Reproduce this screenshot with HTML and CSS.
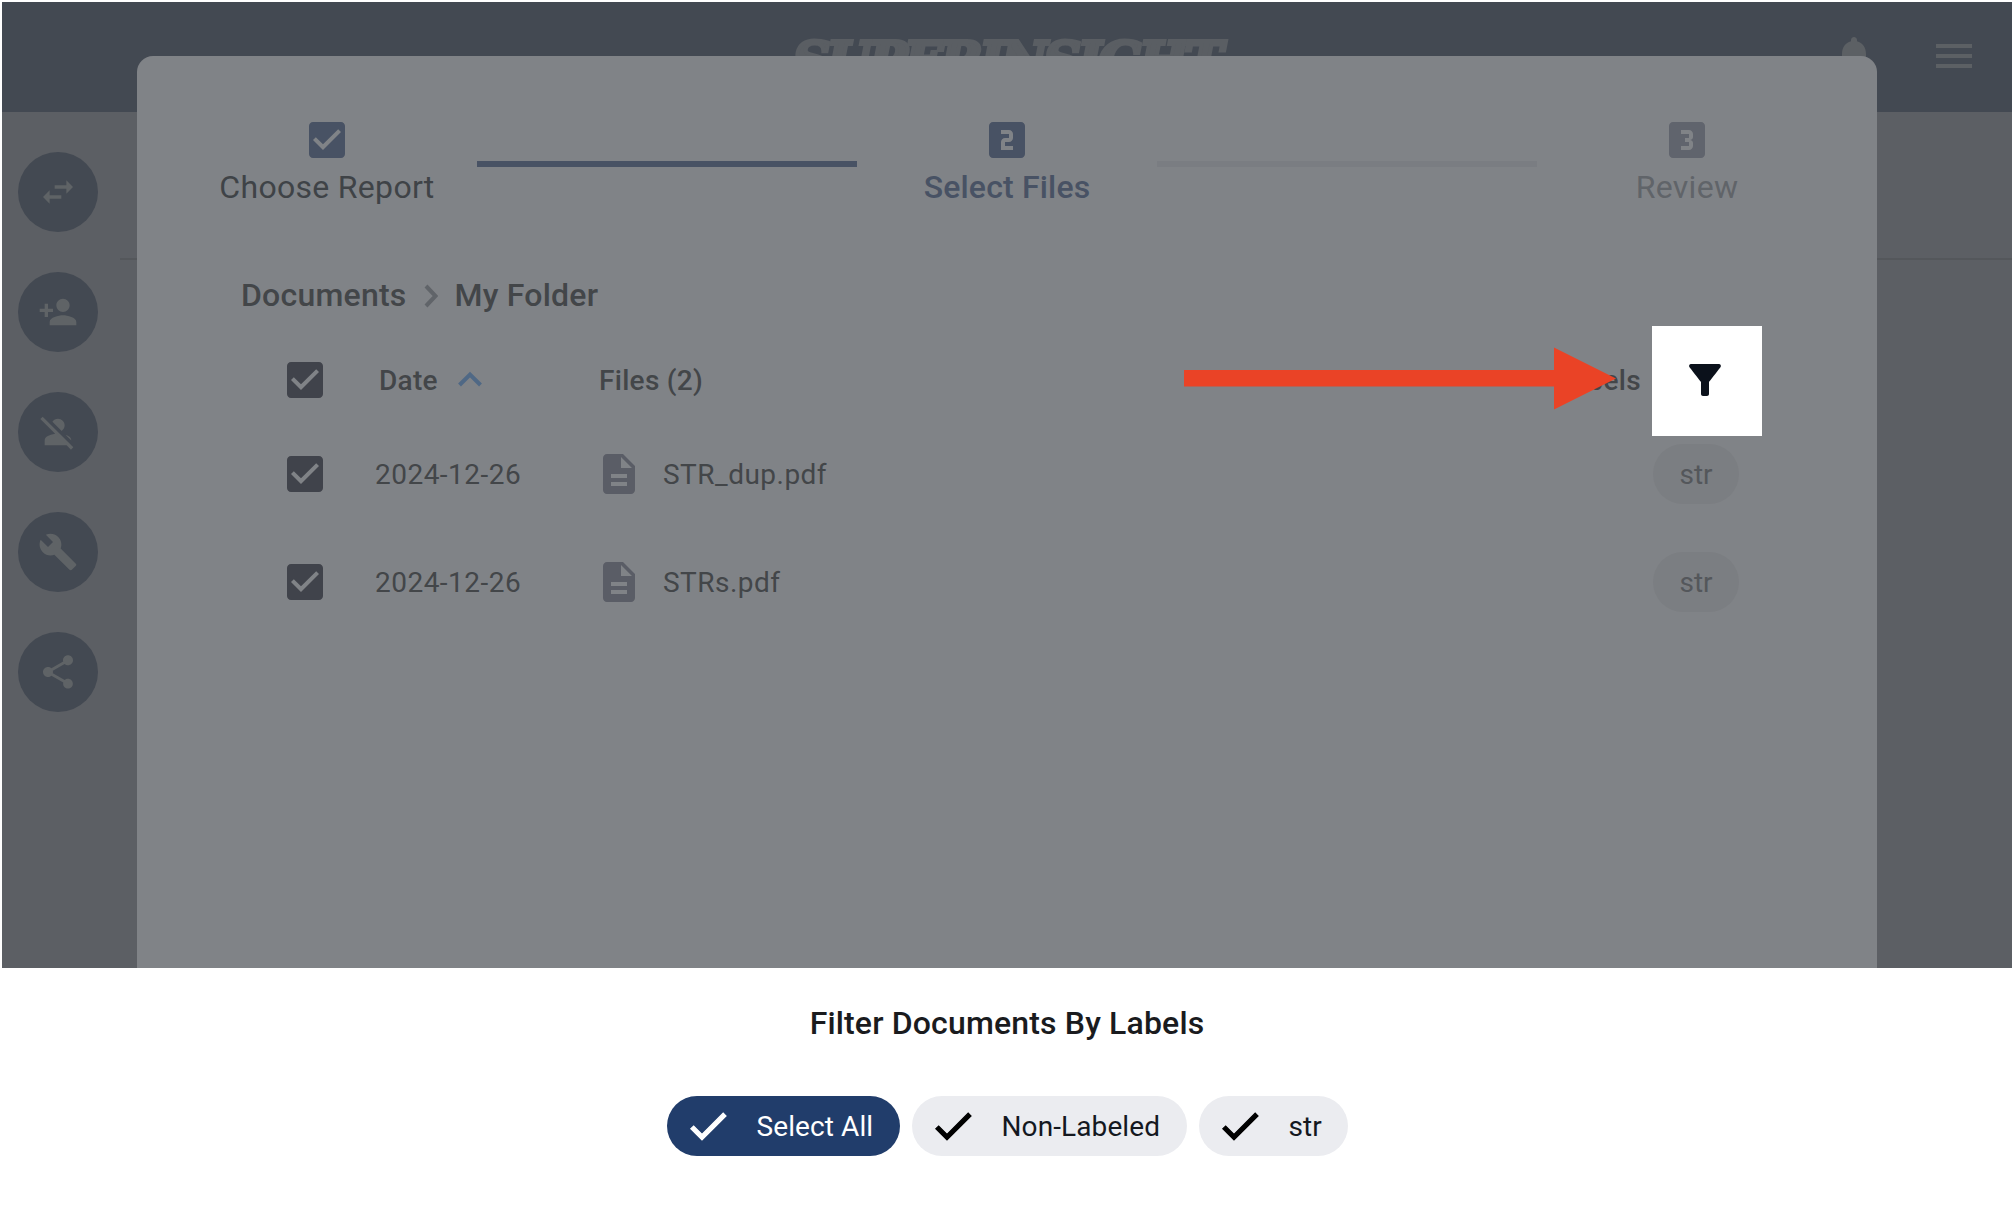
FILE: index.html
```html
<!DOCTYPE html>
<html lang="en">
<head>
<meta charset="utf-8">
<title>Select Files</title>
<link rel="stylesheet" href="styles.css">
</head>
<body>
<svg class="defs" aria-hidden="true">
  <symbol id="checkbox" viewBox="0 0 24 24"><path d="M19 3H5c-1.110 0-2 .9-2 2v14c0 1.100.89 2 2 2h14c1.110 0 2-.9 2-2V5c0-1.100-.89-2-2-2zm-9 14l-5-5 1.410-1.410L10 14.170l7.590-7.590L19 8l-9 9z"/></symbol>
  <symbol id="check" viewBox="0 0 24 24"><path d="M9 16.170L4.830 12l-1.420 1.410L9 19 21 7l-1.410-1.410z"/></symbol>
  <symbol id="doc" viewBox="0 0 24 24"><path d="M14 2H6c-1.100 0-1.990.9-1.990 2L4 20c0 1.100.89 2 1.990 2H18c1.100 0 2-.9 2-2V8l-6-6zm2 16H8v-2h8v2zm0-4H8v-2h8v2zm-3-5V3.500L18.500 9H13z"/></symbol>
</svg>
<div class="screen">
  <header class="topbar">
    <div class="logo">SUPERINSIGHT</div>
    <div class="topbar-actions">
      <svg class="icon" viewBox="0 0 24 24"><path d="M12 22c1.100 0 2-.9 2-2h-4c0 1.100.89 2 2 2zm6-6v-5c0-3.070-1.640-5.640-4.500-6.320V4c0-.83-.67-1.500-1.500-1.500s-1.500.67-1.500 1.500v.68C7.630 5.360 6 7.920 6 11v5l-2 2v1h16v-1l-2-2z"/></svg>
      <svg class="icon" viewBox="0 0 24 24"><path d="M3 18h18v-2H3v2zm0-5h18v-2H3v2zm0-7v2h18V6H3z"/></svg>
    </div>
  </header>
  <div class="body">
    <nav class="rail">
      <span class="rail-btn"><svg viewBox="0 0 24 24"><path d="M6.990 11L3 15l3.990 4v-3H14v-2H6.990v-3zM21 9l-3.990-4v3H10v2h7.010v3L21 9z"/></svg></span>
      <span class="rail-btn"><svg viewBox="0 0 24 24"><path d="M15 12c2.210 0 4-1.790 4-4s-1.790-4-4-4-4 1.790-4 4 1.790 4 4 4zm-9-2V7H4v3H1v2h3v3h2v-3h3v-2H6zm9 4c-2.670 0-8 1.340-8 4v2h16v-2c0-2.660-5.330-4-8-4z"/></svg></span>
      <span class="rail-btn"><svg viewBox="0 0 24 24"><path d="M8.650 5.820C9.360 4.720 10.600 4 12 4c2.210 0 4 1.790 4 4 0 1.400-.72 2.640-1.820 3.350L8.650 5.820zM20 17.170c-.02-1.100-.63-2.110-1.610-2.620-.54-.28-1.130-.54-1.770-.76L20 17.170zM21.190 21.190L2.810 2.810 1.390 4.220l8.890 8.890c-1.810.23-3.390.79-4.670 1.450C4.610 15.070 4 16.100 4 17.220V20h13.170l2.610 2.610 1.410-1.420z"/></svg></span>
      <span class="rail-btn"><svg viewBox="0 0 24 24"><path d="M22.700 19l-9.100-9.100c.9-2.300.4-5-1.500-6.900-2-2-5-2.400-7.400-1.300L9 6 6 9 1.600 4.700C.4 7.100.9 10.100 2.900 12.100c1.900 1.900 4.600 2.400 6.900 1.500l9.100 9.100c.4.4 1 .4 1.400 0l2.300-2.300c.5-.4.5-1.100.1-1.400z"/></svg></span>
      <span class="rail-btn"><svg viewBox="0 0 24 24"><path d="M18 16.080c-.76 0-1.440.3-1.960.77L8.910 12.700c.05-.23.09-.46.09-.7s-.04-.47-.09-.7l7.050-4.110c.54.5 1.250.81 2.040.81 1.660 0 3-1.340 3-3s-1.340-3-3-3-3 1.340-3 3c0 .24.04.47.09.7L8.040 9.810C7.500 9.310 6.790 9 6 9c-1.660 0-3 1.340-3 3s1.340 3 3 3c.79 0 1.500-.31 2.040-.81l7.120 4.160c-.05.21-.08.43-.08.65 0 1.610 1.310 2.920 2.920 2.920 1.610 0 2.920-1.310 2.920-2.920s-1.310-2.920-2.920-2.920z"/></svg></span>
    </nav>
    <main class="page"><div class="page-head"></div></main>
  </div>

  <section class="dialog">
    <div class="steps">
      <div class="step done">
        <svg class="icon"><use href="#checkbox"/></svg>
        <span>Choose Report</span>
      </div>
      <div class="bar full"></div>
      <div class="step current">
        <svg class="icon" viewBox="0 0 24 24"><path d="M19 3H5c-1.100 0-2 .9-2 2v14c0 1.100.9 2 2 2h14c1.100 0 2-.9 2-2V5c0-1.100-.9-2-2-2zm-4 8c0 1.110-.9 2-2 2h-2v2h4v2H9v-4c0-1.110.9-2 2-2h2V9H9V7h4c1.100 0 2 .89 2 2v2z"/></svg>
        <span>Select Files</span>
      </div>
      <div class="bar"></div>
      <div class="step todo">
        <svg class="icon" viewBox="0 0 24 24"><path d="M19 3H5c-1.100 0-2 .9-2 2v14c0 1.100.9 2 2 2h14c1.100 0 2-.9 2-2V5c0-1.100-.9-2-2-2zm-4 7.500c0 .83-.67 1.500-1.500 1.500.83 0 1.500.67 1.500 1.500V15c0 1.110-.9 2-2 2H9v-2h4v-2h-2v-2h2V9H9V7h4c1.100 0 2 .89 2 2v1.500z"/></svg>
        <span>Review</span>
      </div>
    </div>

    <div class="crumbs">
      <span>Documents</span>
      <svg class="crumb-sep" viewBox="0 0 14 24"><path d="M2 2l9.500 10L2 22"/></svg>
      <span>My Folder</span>
    </div>

    <div class="table">
      <div class="row head">
        <svg class="icon box"><use href="#checkbox"/></svg>
        <span class="date">Date<svg class="sort" viewBox="0 0 24 16"><path d="M1.500 14L12 3.500 22.500 14"/></svg></span>
        <span class="name">Files (2)</span>
        <span class="labels">Labels</span>
        <button class="filter"><svg class="icon" viewBox="0 0 24 24"><path d="M4.250 5.610C6.270 8.200 10 13 10 13v6c0 .55.45 1 1 1h2c.55 0 1-.45 1-1v-6c0 0 3.720-4.800 5.740-7.390C20.250 4.950 19.780 4 18.950 4H5.040C4.210 4 3.740 4.950 4.250 5.610z"/></svg></button>
        <svg class="arrow" viewBox="0 0 432 63"><path d="M0 23H370V0.500L432 31.500 370 62.500V39.500H0z"/></svg>
      </div>
      <div class="row">
        <svg class="icon box"><use href="#checkbox"/></svg>
        <span class="date">2024-12-26</span>
        <span class="name"><svg class="icon doc"><use href="#doc"/></svg>STR_dup.pdf</span>
        <span class="tag">str</span>
      </div>
      <div class="row">
        <svg class="icon box"><use href="#checkbox"/></svg>
        <span class="date">2024-12-26</span>
        <span class="name"><svg class="icon doc"><use href="#doc"/></svg>STRs.pdf</span>
        <span class="tag">str</span>
      </div>
    </div>
  </section>

  <section class="sheet">
    <h2>Filter Documents By Labels</h2>
    <div class="chips">
      <button class="chip all"><svg class="icon"><use href="#check"/></svg>Select All</button>
      <button class="chip non"><svg class="icon"><use href="#check"/></svg>Non-Labeled</button>
      <button class="chip str"><svg class="icon"><use href="#check"/></svg>str</button>
    </div>
  </section>
</div>
</body>
</html>
```
FILE: styles.css
```css
* { box-sizing: border-box; }
body { margin: 0; background: #fff; font-family: Roboto, "Liberation Sans", sans-serif; font-size: 28px; color: #434649; }
button { font: inherit; border: 0; margin: 0; padding: 0; }
.defs { position: absolute; width: 0; height: 0; }
.icon { width: 48px; height: 48px; flex: none; fill: currentColor; display: block; }

.screen { position: relative; width: 2014px; height: 1212px; padding: 2px 2px 0; overflow: hidden; display: flex; flex-direction: column; }
.topbar { height: 110px; background: #434952; display: grid; place-items: start center; flex: none; color: #5c6064; }
.topbar > * { grid-area: 1 / 1; }
.logo { margin: 27px 0 0 -2px; font: italic bold 52px/64px "DejaVu Serif", serif; white-space: nowrap; -webkit-text-stroke: 4px #5a5e63; color: #5a5e63; letter-spacing: -3.7px; }
.topbar-actions { justify-self: end; display: flex; gap: 52px; padding: 30px 34px 0 0; }

.body { flex: 1; display: flex; background: #5c5f64; }
.rail { width: 118px; padding: 40px 16px; display: flex; flex-direction: column; gap: 40px; }
.rail-btn { width: 80px; height: 80px; border-radius: 50%; background: #434952; display: grid; place-items: center; }
.rail-btn svg { width: 40px; height: 40px; fill: #5f6366; }
.page { flex: 1; }
.page-head { height: 148px; border-bottom: 2px solid #54575b; }

.dialog { position: absolute; left: 137px; top: 56px; width: 1740px; height: 912px; border-radius: 16px 16px 0 0; background: #808387; padding: 60px 80px 0; }
.steps { display: flex; justify-content: space-between; }
.step { width: 220px; display: flex; flex-direction: column; align-items: center; font-size: 32px; line-height: 40px; white-space: nowrap; letter-spacing: 0.3px; }
.step span { margin-top: 3px; }
.bar { width: 380px; height: 6px; margin-top: 45px; background: #7a7d82; }
.bar.full { background: #485264; }
.done { color: #3f4347; }
.done .icon { color: #485264; }
.current { color: #485264; font-weight: 500; letter-spacing: 0.17px; }
.todo { color: #606469; }
.todo .icon { color: #60646d; }

.crumbs { display: flex; align-items: center; height: 40px; margin: 68px 0 0 24px; font-size: 32px; font-weight: 500; letter-spacing: 0.22px; }
.crumb-sep { width: 14px; height: 24px; margin: 2px 16px 0 18px; fill: none; stroke: #606469; stroke-width: 4; }

.table { padding-left: 64px; margin-top: 25px; }
.row { position: relative; height: 108px; display: flex; align-items: center; letter-spacing: 0.48px; }
.row.head { height: 80px; font-weight: 500; letter-spacing: 0.3px; }
.box { color: #40434b; }
.date { width: 220px; margin-left: 46px; display: flex; align-items: center; }
.head .date { padding-left: 4px; }
.sort { width: 24px; height: 16px; margin: -2px 0 0 20.5px; fill: none; stroke: #4f6885; stroke-width: 4; }
.name { display: flex; align-items: center; gap: 20px; flex: 1; }
.head .name { padding-left: 4px; }
.doc { color: #5a5d66; }
.labels { margin-right: 156px; }
.tag { width: 86px; height: 60px; border-radius: 30px; background: #7b7e82; color: #54575b; margin-right: 58px; display: grid; place-items: center; letter-spacing: 0; }
.filter { position: absolute; left: 1371px; top: -14px; width: 110px; height: 110px; padding: 0 4px 2px 0; background: #fff; color: #0b111b; display: grid; place-items: center; }
.arrow { position: absolute; left: 903px; top: 6.5px; width: 432px; height: 63px; fill: #ea4326; }

.sheet { position: absolute; left: 0; top: 968px; width: 2014px; height: 244px; background: #fff; display: flex; flex-direction: column; align-items: center; padding-top: 35px; }
.sheet h2 { margin: 0; font-size: 32px; line-height: 40px; font-weight: 500; color: #1a1b1e; letter-spacing: 0.16px; }
.chips { display: flex; gap: 12px; margin-top: 53px; }
.chip { height: 60px; border-radius: 30px; background: #ebecf0; color: #14181f; display: flex; align-items: center; padding-left: 17px; gap: 25px; white-space: nowrap; letter-spacing: 0.1px; }
.chip .icon { color: #000; stroke: currentColor; stroke-width: 0.6px; }
.chip.all { width: 233px; background: #213d6b; color: #fff; }
.chip.all .icon { color: #fff; }
.chip.non { width: 275px; }
.chip.str { width: 149px; }
```
